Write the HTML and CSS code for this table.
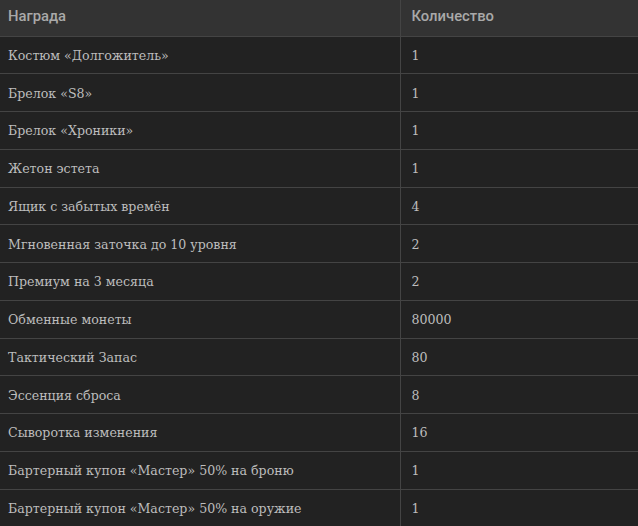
FILE: index.html
```html
<!DOCTYPE html>
<html lang="ru">
<head>
<meta charset="utf-8">
<link rel="stylesheet" href="styles.css">
</head>
<body>
<table class="rewards">
  <thead>
    <tr><th class="c-name">Награда</th><th class="c-qty">Количество</th></tr>
  </thead>
  <tbody>
    <tr><td>Костюм «Долгожитель»</td><td>1</td></tr>
    <tr><td>Брелок «S8»</td><td>1</td></tr>
    <tr><td>Брелок «Хроники»</td><td>1</td></tr>
    <tr><td>Жетон эстета</td><td>1</td></tr>
    <tr><td>Ящик с забытых времён</td><td>4</td></tr>
    <tr><td>Мгновенная заточка до 10 уровня</td><td>2</td></tr>
    <tr><td>Премиум на 3 месяца</td><td>2</td></tr>
    <tr><td>Обменные монеты</td><td>80000</td></tr>
    <tr><td>Тактический Запас</td><td>80</td></tr>
    <tr><td>Эссенция сброса</td><td>8</td></tr>
    <tr><td>Сыворотка изменения</td><td>16</td></tr>
    <tr><td>Бартерный купон «Мастер» 50% на броню</td><td>1</td></tr>
    <tr><td>Бартерный купон «Мастер» 50% на оружие</td><td>1</td></tr>
  </tbody>
</table>
</body>
</html>
```
FILE: styles.css
```css
html, body {
  margin: 0;
  padding: 0;
  background: #222222;
}
.rewards {
  width: 638px;
  border-collapse: collapse;
  table-layout: fixed;
  background: #222222;
}
.c-name { width: 400px; }
.rewards th {
  background: #333333;
  color: #a9a9a9;
  font-family: "Roboto", "Noto Sans", sans-serif;
  font-weight: 500;
  font-size: 14.8px;
  text-align: left;
  height: 36px;
  padding: 0 8px 3px 8px;
  box-sizing: border-box;
  border-bottom: 1px solid #444444;
}
.rewards th + th { border-left: 1px solid #444444; padding-left: 11px; }
.rewards td {
  color: #bdbdbd;
  font-family: "DejaVu Serif", serif;
  font-size: 12.6px;
  height: 37.75px;
  padding: 1px 8px 0 8px;
  box-sizing: border-box;
  border-bottom: 1px solid #444444;
}
.rewards td + td { border-left: 1px solid #444444; padding-left: 11px; }
```
